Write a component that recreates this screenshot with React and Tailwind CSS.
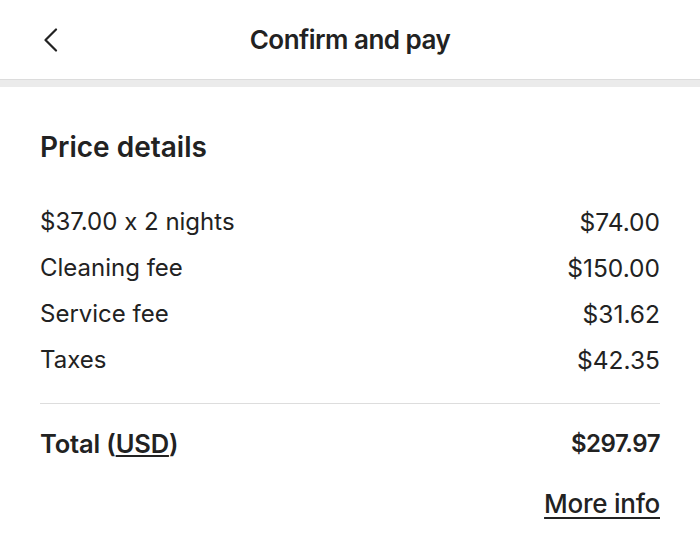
const ROWS = [
  { label: '$37.00 x 2 nights', amount: '$74.00' },
  { label: 'Cleaning fee', amount: '$150.00' },
  { label: 'Service fee', amount: '$31.62' },
  { label: 'Taxes', amount: '$42.35' },
]

export default function App() {
  return (
    <div
      className="w-[700px] h-[548px] bg-white text-[#222222] overflow-hidden [font-feature-settings:'calt'_0]"
      style={{ fontFamily: 'Inter, "Noto Sans", sans-serif' }}
    >
      {/* Header */}
      <header className="relative h-[79px] flex items-center justify-center">
        <button className="absolute left-[43px] top-[28px]" aria-label="Back">
          <svg width="15" height="24" viewBox="0 0 15 24" fill="none">
            <path d="M13 1.5L2.5 12L13 22.5" stroke="#222222" strokeWidth="2.2" strokeLinecap="round" strokeLinejoin="round" />
          </svg>
        </button>
        <h1 className="text-[26px] font-semibold tracking-[-0.02em] leading-[34px]">Confirm and pay</h1>
      </header>
      <div className="h-[8px] bg-[#ebebeb] border-t border-[#dcdcdc]" />

      {/* Price details */}
      <section className="px-[40px] pt-[43px]">
        <h2 className="text-[28px] font-semibold leading-[34px]">Price details</h2>

        <div className="mt-[42px] flex flex-col gap-[14px]">
          {ROWS.map((row) => (
            <div key={row.label} className="flex justify-between text-[24px] leading-[32px]">
              <span>{row.label}</span>
              <span className="text-[24.5px]">{row.amount}</span>
            </div>
          ))}
        </div>

        <div className="mt-[27px] border-t border-[#dddddd]" />

        <div className="mt-[24px] flex justify-between font-semibold leading-[32px] tracking-[-0.01em]">
          <span className="text-[25.5px]">
            Total (<span className="underline underline-offset-2">USD</span>)
          </span>
          <span className="text-[24px] tracking-[-0.02em]">$297.97</span>
        </div>

        <div className="mt-[28px] flex justify-end">
          <a className="text-[26px] font-medium underline underline-offset-4 leading-[32px] tracking-[-0.01em]">
            More info
          </a>
        </div>
      </section>
    </div>
  )
}
